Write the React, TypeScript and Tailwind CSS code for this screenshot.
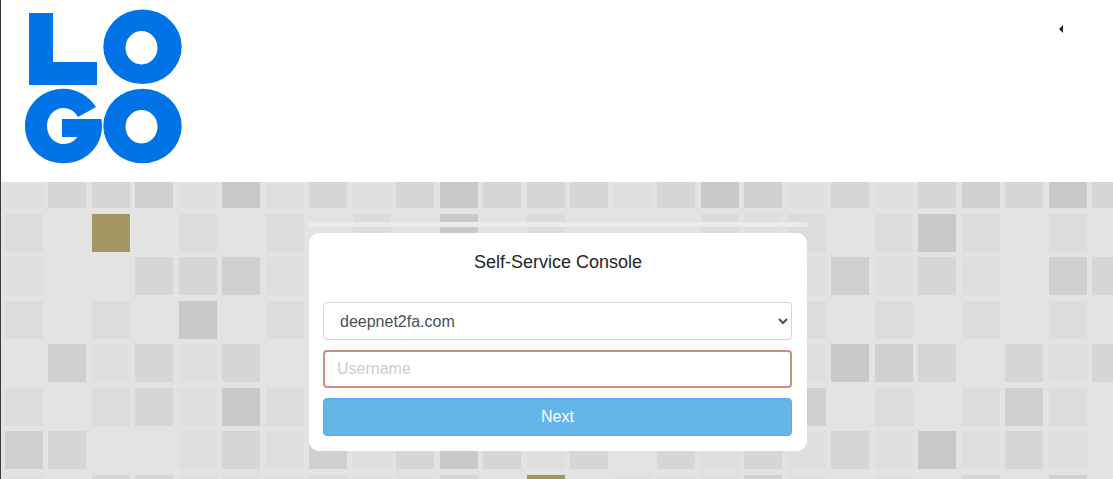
const tones: Record<string, string> = {
  '0': 'bg-[#e3e3e3]',
  '1': 'bg-[#dfdfdf]',
  '2': 'bg-[#dcdcdc]',
  '3': 'bg-[#d6d6d6]',
  '4': 'bg-[#d0d0d0]',
  '5': 'bg-[#c9c9c9]',
  g: 'bg-[#a39661]',
}

// one string per row, one character per tile
const tiles = [
  '13341513135333135413134353',
  '20g02020205020002120252020',
  '10033410000000000014131043',
  '20205020000000000020202020',
  '04131300000000000015430313',
  '20231520000000000040202420',
  '43001314135313031313151310',
  '103311121130g0111410103040',
]

function Logo() {
  return (
    <svg width="160" height="170" viewBox="24 4 160 170" className="ml-[24px] block" fill="#0073e6">
      <path d="M29 13h24v49h44v23H29z" />
      <path
        fillRule="evenodd"
        d="M142.5 9.5a39.2 37.3 0 1 0 0 74.6a39.2 37.3 0 1 0 0-74.6zM141.5 31a16 16.7 0 1 1 0 33.4a16 16.7 0 1 1 0-33.4z"
      />
      <path
        fillRule="evenodd"
        d="M142.5 88.7a39.2 37.3 0 1 0 0 74.6a39.2 37.3 0 1 0 0-74.6zM141.5 110a16 16.7 0 1 1 0 33.4a16 16.7 0 1 1 0-33.4z"
      />
      <path d="M96 107C89 96 77 88.7 63.5 88.7C42 88.7 25 105 25 126C25 147 42 163.3 63.5 163.3C85 163.3 102 147 102 126L101.5 119H62V137H77.5C74 141.5 69 144 63.5 144C54 144 47 136 47 126C47 116 54 108 63.5 108C70 108 75 111.5 78 117z" />
    </svg>
  )
}

export default function App() {
  return (
    <div className="relative h-[479px] overflow-hidden bg-white font-['Liberation_Sans',sans-serif]">
      <header className="relative h-[182px] pt-[4px]">
        <Logo />
        <span className="absolute left-[1059px] top-[25px] h-0 w-0 border-y-[4px] border-r-[4px] border-y-transparent border-r-[#212529]" />
      </header>
      <main className="relative h-[297px] overflow-hidden bg-[#e3e3e3]">
        <div className="absolute left-[4.5px] top-[-12px] grid grid-cols-[repeat(26,38px)] auto-rows-[38px] gap-[5.5px] blur-[0.7px]">
          {tiles.flatMap((row, r) =>
            row.split('').map((t, c) => <div key={`${r}-${c}`} className={tones[t]} />),
          )}
        </div>
        <div className="relative ml-[308px] w-[500px] pt-[40px]">
          <div className="h-[5px] rounded-[3px] bg-[#e9ecef]" />
          <div className="ml-[1px] mt-[6px] w-[498px] rounded-[10px] bg-white px-[14px] pb-[15px] pt-[18px]">
            <h1 className="h-[51px] text-center text-[18px] leading-[22px] text-[#212529]">Self-Service Console</h1>
            <select className="block h-[38px] w-[469px] rounded-[4px] border border-[#ced4da] bg-white px-[12px] text-[16px] text-[#495057]">
              <option>deepnet2fa.com</option>
            </select>
            <input
              placeholder="Username"
              className="mt-[10px] block h-[38px] w-[469px] rounded-[4px] border-2 border-[#c98f88] bg-white px-[12px] text-[16px] text-[#495057] placeholder:text-[#cccccc]"
            />
            <button className="mt-[10px] block h-[38px] w-[469px] rounded-[4px] border border-[#5aa9f0] bg-[#65b5e9] text-center text-[16px] text-white">
              Next
            </button>
          </div>
        </div>
      </main>
      <div className="absolute inset-y-0 left-0 w-[1px] bg-[#3a3a3a]" />
    </div>
  )
}
